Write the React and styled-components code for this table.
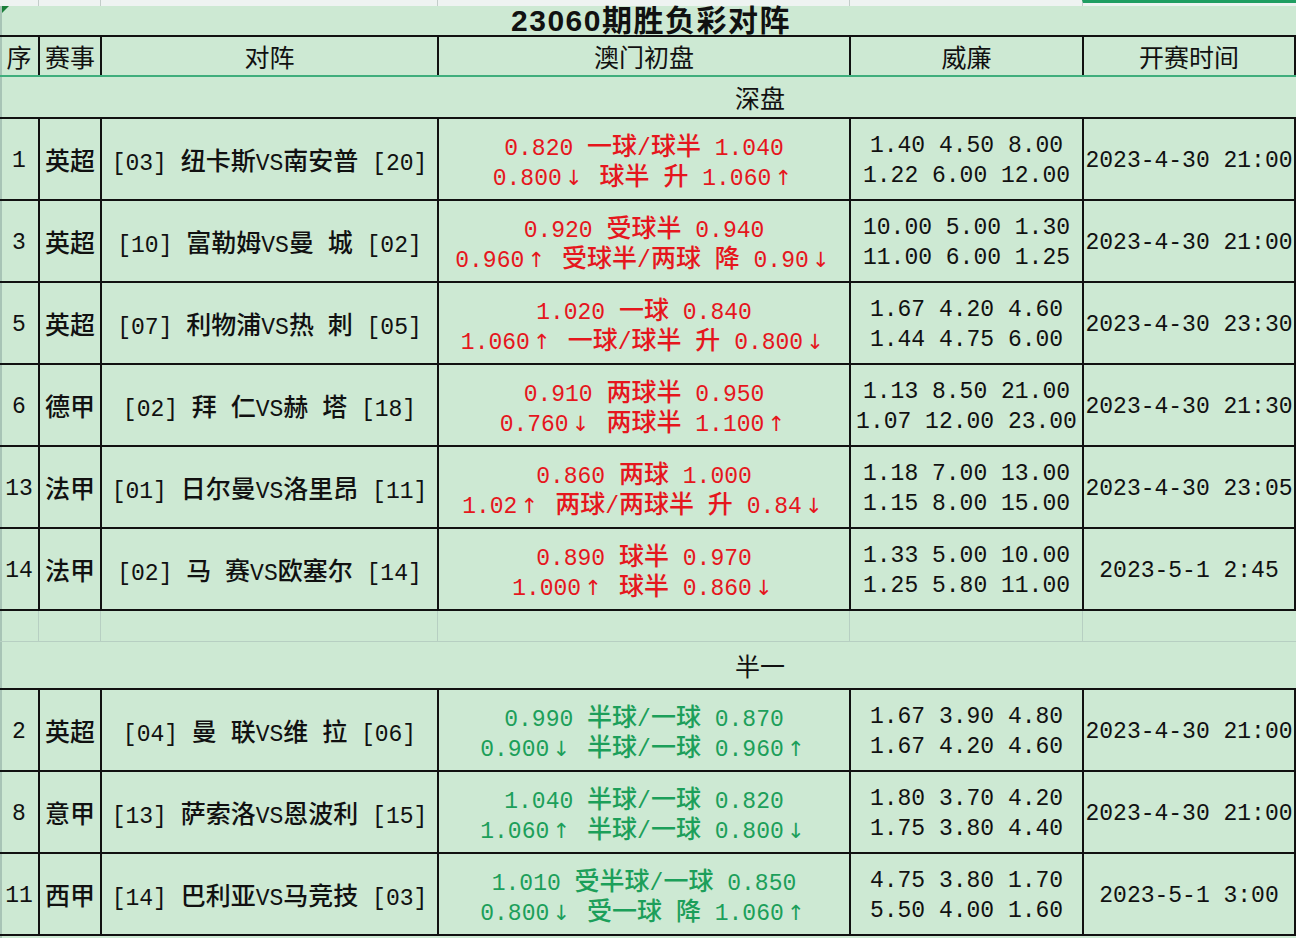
import React from "react";
import styled, { createGlobalStyle } from "styled-components";

const COLS = "38px 62px 337px 412px 233px 214px";
const INK = "#111";
const GRID_GRAY = "#b7cfc2";

const Global = createGlobalStyle`
  html, body { margin: 0; padding: 0; background: #cde9d3; }
  body { font-family: "Liberation Mono", "Noto Sans CJK SC", monospace; color: ${INK}; }
  * { box-sizing: border-box; }
`;

const Sheet = styled.div`
  width: 1296px;
  height: 938px;
  overflow: hidden;
  background: #cde9d3;
  display: flex;
  flex-direction: column;
  box-shadow: inset 2px 0 0 #a8c4b6;
`;

const TopStrip = styled.div`
  flex: none;
  height: 6px;
  display: grid;
  grid-template-columns: ${COLS};
  background: #eef3f1;
`;

const StripCell = styled.div`
  border-left: ${(p) => (p.$first ? "none" : "1px solid #c3cdc9")};
  border-top: ${(p) => (p.$active ? "3px solid #1f9e62" : "none")};
`;

const TitleRow = styled.div`
  position: relative;
  flex: none;
  height: 31px;
  border-bottom: 2px solid ${INK};
  display: flex;
  justify-content: center;
  align-items: flex-end;
  font-family: "Liberation Sans", "Noto Sans CJK SC", sans-serif;
  font-weight: 700;
  font-size: 30px;
  line-height: 29px;
  letter-spacing: 1.5px;
  padding-left: 6px;

  &::before {
    content: "";
    position: absolute;
    left: 2px;
    top: 0;
    border-top: 7px solid #1b7f3a;
    border-right: 7px solid transparent;
  }
`;

const HeaderRow = styled.div`
  flex: none;
  height: 40px;
  display: grid;
  grid-template-columns: ${COLS};
  border-bottom: 2px solid #3fae7c;
`;

const HeadCell = styled.div`
  display: flex;
  align-items: center;
  justify-content: center;
  border-left: ${(p) => (p.$first ? "none" : `2px solid ${INK}`)};
  border-right: ${(p) => (p.$last ? `2px solid ${INK}` : "none")};
  font-family: "Noto Sans CJK SC", sans-serif;
  font-size: 25px;
  white-space: nowrap;
`;

const SectionRow = styled.div`
  flex: none;
  height: ${(p) => p.$h}px;
  display: flex;
  align-items: center;
  justify-content: center;
  padding-left: 224px;
  font-family: "Noto Sans CJK SC", sans-serif;
  font-size: 25px;
`;

const Group = styled.div`
  flex: none;
  border-bottom: 2px solid ${INK};
`;

const DataRow = styled.div`
  height: 82px;
  display: grid;
  grid-template-columns: ${COLS};
  border-top: 2px solid ${INK};
`;

const Cell = styled.div`
  display: flex;
  flex-direction: column;
  align-items: center;
  justify-content: center;
  padding-top: 3px;
  border-left: ${(p) => (p.$first ? "none" : `2px solid ${INK}`)};
  border-right: ${(p) => (p.$last ? `2px solid ${INK}` : "none")};
  font-size: 23px;
  line-height: 30px;
  white-space: pre;
  color: ${(p) => (p.$tone === "red" ? "#e5161d" : p.$tone === "green" ? "#1c9f5a" : INK)};
`;

const Line = styled.div`
  height: 30px;
  line-height: 30px;
  white-space: pre;
`;

const Han = styled.span`
  display: inline-block;
  font-family: "Noto Sans CJK SC", sans-serif;
  font-size: 25px;
  font-weight: 500;
  line-height: 26px;
`;

const Arrow = styled.span`
  display: inline-block;
  width: 24px;
  text-align: center;
  font-family: "DejaVu Sans", sans-serif;
  font-size: 21px;
  line-height: 24px;
`;

const Spacer = styled.div`
  flex: none;
  height: 31px;
  display: grid;
  grid-template-columns: ${COLS};
  border-bottom: 1px solid ${GRID_GRAY};
`;

const SpacerCell = styled.div`
  border-left: ${(p) => (p.$first ? "none" : `1px solid ${GRID_GRAY}`)};
`;

function Mixed({ text }) {
  const parts = text.split(/([\u3000-\u303f\u4e00-\u9fff\uff00-\uffef]+|[↑↓])/);
  return parts.map((p, i) => {
    if (!p) return null;
    if (p === "↑" || p === "↓") return <Arrow key={i}>{p}</Arrow>;
    if (/[\u3000-\u303f\u4e00-\u9fff\uff00-\uffef]/.test(p)) return <Han key={i}>{p}</Han>;
    return <React.Fragment key={i}>{p}</React.Fragment>;
  });
}

const HEAD = ["序", "赛事", "对阵", "澳门初盘", "威廉", "开赛时间"];

const DEEP = [
  {
    no: "1", league: "英超", match: "[03] 纽卡斯VS南安普 [20]",
    odds: ["0.820 一球/球半 1.040", "0.800↓ 球半 升 1.060↑"],
    wh: ["1.40 4.50 8.00", "1.22 6.00 12.00"], time: "2023-4-30 21:00",
  },
  {
    no: "3", league: "英超", match: "[10] 富勒姆VS曼 城 [02]",
    odds: ["0.920 受球半 0.940", "0.960↑ 受球半/两球 降 0.90↓"],
    wh: ["10.00 5.00 1.30", "11.00 6.00 1.25"], time: "2023-4-30 21:00",
  },
  {
    no: "5", league: "英超", match: "[07] 利物浦VS热 刺 [05]",
    odds: ["1.020 一球 0.840", "1.060↑ 一球/球半 升 0.800↓"],
    wh: ["1.67 4.20 4.60", "1.44 4.75 6.00"], time: "2023-4-30 23:30",
  },
  {
    no: "6", league: "德甲", match: "[02] 拜 仁VS赫 塔 [18]",
    odds: ["0.910 两球半 0.950", "0.760↓ 两球半 1.100↑"],
    wh: ["1.13 8.50 21.00", "1.07 12.00 23.00"], time: "2023-4-30 21:30",
  },
  {
    no: "13", league: "法甲", match: "[01] 日尔曼VS洛里昂 [11]",
    odds: ["0.860 两球 1.000", "1.02↑ 两球/两球半 升 0.84↓"],
    wh: ["1.18 7.00 13.00", "1.15 8.00 15.00"], time: "2023-4-30 23:05",
  },
  {
    no: "14", league: "法甲", match: "[02] 马 赛VS欧塞尔 [14]",
    odds: ["0.890 球半 0.970", "1.000↑ 球半 0.860↓"],
    wh: ["1.33 5.00 10.00", "1.25 5.80 11.00"], time: "2023-5-1 2:45",
  },
];

const HALF = [
  {
    no: "2", league: "英超", match: "[04] 曼 联VS维 拉 [06]",
    odds: ["0.990 半球/一球 0.870", "0.900↓ 半球/一球 0.960↑"],
    wh: ["1.67 3.90 4.80", "1.67 4.20 4.60"], time: "2023-4-30 21:00",
  },
  {
    no: "8", league: "意甲", match: "[13] 萨索洛VS恩波利 [15]",
    odds: ["1.040 半球/一球 0.820", "1.060↑ 半球/一球 0.800↓"],
    wh: ["1.80 3.70 4.20", "1.75 3.80 4.40"], time: "2023-4-30 21:00",
  },
  {
    no: "11", league: "西甲", match: "[14] 巴利亚VS马竞技 [03]",
    odds: ["1.010 受半球/一球 0.850", "0.800↓ 受一球 降 1.060↑"],
    wh: ["4.75 3.80 1.70", "5.50 4.00 1.60"], time: "2023-5-1 3:00",
  },
];

function MatchRow({ row, tone }) {
  return (
    <DataRow>
      <Cell $first><Line>{row.no}</Line></Cell>
      <Cell><Line><Han>{row.league}</Han></Line></Cell>
      <Cell><Line><Mixed text={row.match} /></Line></Cell>
      <Cell $tone={tone}>
        {row.odds.map((t, i) => (
          <Line key={i}><Mixed text={t} /></Line>
        ))}
      </Cell>
      <Cell>
        {row.wh.map((t, i) => (
          <Line key={i}>{t}</Line>
        ))}
      </Cell>
      <Cell $last><Line>{row.time}</Line></Cell>
    </DataRow>
  );
}

export default function App() {
  return (
    <>
      <Global />
      <Sheet>
        <TopStrip>
          {HEAD.map((_, i) => (
            <StripCell key={i} $first={i === 0} $active={i === 5} />
          ))}
        </TopStrip>
        <TitleRow>23060期胜负彩对阵</TitleRow>
        <HeaderRow>
          {HEAD.map((h, i) => (
            <HeadCell key={h} $first={i === 0} $last={i === HEAD.length - 1}>{h}</HeadCell>
          ))}
        </HeaderRow>
        <SectionRow $h={40}>深盘</SectionRow>
        <Group>
          {DEEP.map((r) => (
            <MatchRow key={r.no} row={r} tone="red" />
          ))}
        </Group>
        <Spacer>
          {HEAD.map((_, i) => (
            <SpacerCell key={i} $first={i === 0} />
          ))}
        </Spacer>
        <SectionRow $h={46}>半一</SectionRow>
        <Group>
          {HALF.map((r) => (
            <MatchRow key={r.no} row={r} tone="green" />
          ))}
        </Group>
      </Sheet>
    </>
  );
}
